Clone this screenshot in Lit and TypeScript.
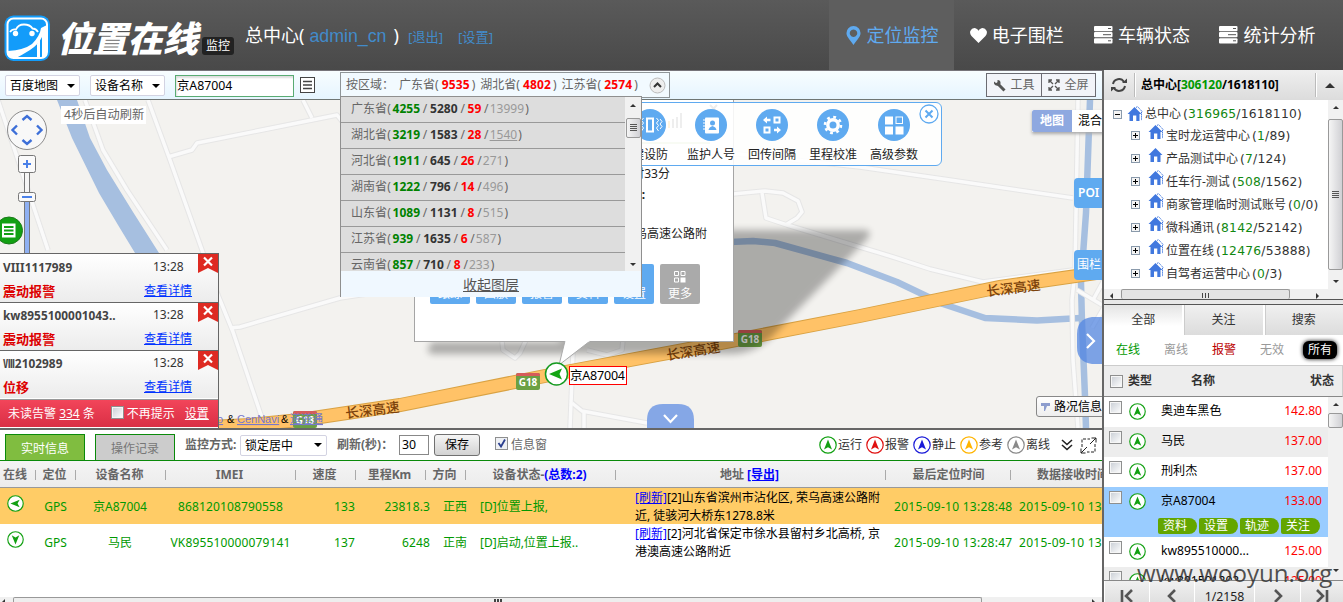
import { LitElement, html, svg, css } from "lit";
import { customElement } from "lit/decorators.js";

const PROVINCES: [string, number, number, number, number][] = [
  ["广东省", 4255, 5280, 59, 13999],
  ["湖北省", 3219, 1583, 28, 1540],
  ["河北省", 1911, 645, 26, 271],
  ["湖南省", 1222, 796, 14, 496],
  ["山东省", 1089, 1131, 8, 515],
  ["江苏省", 939, 1635, 6, 587],
  ["云南省", 857, 710, 8, 233],
];
const ALARMS = [
  { name: "VIII1117989", type: "震动报警" },
  { name: "kw8955100001043..", type: "震动报警" },
  { name: "Ⅷ2102989", type: "位移" },
];
const TREE: [string, string, string, boolean][] = [
  ["宝时龙运营中心", "1", "89", true],
  ["产品测试中心", "7", "124", false],
  ["任车行-测试", "508", "1562", true],
  ["商家管理临时测试账号", "0", "0", true],
  ["微科通讯", "8142", "52142", true],
  ["位置在线", "12476", "53888", true],
  ["自驾者运营中心", "0", "3", true],
];
const DEVICES = [
  { name: "奥迪车黑色", v: "142.80" },
  { name: "马民", v: "137.00" },
  { name: "刑利杰", v: "137.00" },
  { name: "京A87004", v: "133.00", sel: true },
  { name: "kw895510000...", v: "125.00" },
  { name: "kw891501202...", v: "125.00" },
];
const LEGEND = [
  ["运行", "#12a012"],
  ["报警", "#e01010"],
  ["静止", "#1a1ad8"],
  ["参考", "#ffb400"],
  ["离线", "#8a8a8a"],
];

/* Round compass marker; rot turns the arrow away from north. */
const compass = (size: number, color = "#12a012", rot = 0) => html`<svg width=${size} height=${size} viewBox="0 0 18 18">
  <circle cx="9" cy="9" r="8.2" fill="#fff" stroke=${color} stroke-width="1.2" />
  <path d="M9 3.6L13 13.4L9 11.2L5 13.4Z" fill=${color} transform="rotate(${rot} 9 9)" />
</svg>`;

const house = (double: boolean) => html`<svg class="house" width="16" height="16" viewBox="0 0 16 16">
  ${double ? svg`<path d="M9 1.5L10.5 .5L15.5 6M14.5 6V14.5" fill="none" stroke="#4178de" stroke-width="1" stroke-dasharray="1.4 .7"/>` : ""}
  <path d="M7.5 1L14.5 8H12.5V15H9.3V9.5H6V15H2.5V8H.5Z" fill="#4178de" />
</svg>`;

const server = html`<svg width="19" height="18" viewBox="0 0 19 18">
  <rect width="18.5" height="5.2" rx="1" fill="#fff" /><rect y="6.1" width="18.5" height="5.2" rx="1" fill="#fff" />
  <rect y="12.2" width="18.5" height="5.2" rx="1" fill="#fff" />
  <path d="M14 2.5h3M9 8.7h8M14 14.8h3" stroke="#555" stroke-width="1" />
</svg>`;

const ROADS = [
  "M85 100L103 150L127 190L167 250",
  "M148 100L170 160L202 250L218 295L233 332L262 418",
  "M168 157L192 150L197 143L337 115L345 125",
  "M303 100L312 118",
  "M230 328L240 327L340 298L413 287",
  "M-2 100L8 130L48 250",
  "M733 194L765 191L783 193L798 201L802 212L797 218L787 224",
  "M762 193L766 218L787 225L870 250L893 257L930 269L983 282L1073 270",
  "M700 150L860 167L950 180L1073 198",
  "M1078 100L1075 270L1072 300L1073 360L1078 428",
  "M1077 290L1102 305",
  "M1104 280L1093 300",
  "M1104 307L1092 328",
  "M573 353L570 428",
  "M572 403L582 411L647 423",
  "M584 412V428",
  "M502 342L503 350L515 358L520 353L526 340",
  "M587 350L607 355L622 350L623 340",
];
const HIGHWAY = "M190 428L250 425L300 420L340 414L400 405L560 373L700 347L860 316L1000 287L1104 272";

const shield = (x: number, y: number) => svg`<g>
  <rect x=${x - 12} y=${y - 9} width="24" height="17" rx="2" fill="#6ba043"/>
  <path d="M${x - 12} ${y - 6}v-1q0-2 2-2h20q2 0 2 2v1z" fill="#d65c5a"/>
  <text x=${x} y=${y + 4} class="g18">G18</text></g>`;

@customElement("app-root")
export class AppRoot extends LitElement {
  static styles = css`
    :host { display: block; width: 1343px; height: 602px; overflow: hidden; position: relative; font: 12px/16px "Noto Sans", "Noto Sans CJK SC", sans-serif; color: #333; background: #fff; }
    * { box-sizing: border-box; }
    svg { display: block; flex: none; }
    span, b, a, u { white-space: nowrap; }
    .head { height: 71px; display: flex; background: linear-gradient(#5a5a5a, #494949); border-bottom: 1px solid #77747a; color: #fff; }
    .brand { display: flex; width: 829px; padding: 15px 0 0 4px; }
    .wordmark { font: italic 900 35.5px/46px "Noto Sans CJK SC", sans-serif; letter-spacing: -.3px; margin-left: 6px; margin-top: -1px; width: 146px; }
    .badge { margin: 22px 0 0 -1px; width: 32px; height: 18px; border-radius: 3px; background: #222; font-size: 12px; line-height: 18px; text-align: center; }
    .org { font-size: 18px; line-height: 24px; margin: 8px 0 0 11px; display: flex; align-items: baseline; }
    .org .adm { color: #428bca; font-family: "Liberation Sans", sans-serif; margin: 0 7px 0 5px; font-size: 17.8px; }
    .org .lk { color: #428bca; font-size: 13.2px; margin-left: 9px; width: 41px; }
    .nav { display: flex; }
    .nav div { width: 125.4px; height: 70px; display: flex; align-items: center; justify-content: center; gap: 5px; font-size: 18px; line-height: 24px; }
    .nav .on { background: #5e5e5e; color: #5faaf0; width: 125px; padding-left: 1px; gap: 6px; }
    .body { display: flex; height: 531px; }
    .left { width: 1102px; height: 531px; position: relative; }
    .bar { height: 29px; display: flex; align-items: flex-start; padding: 3px 6px 0 5px; background: linear-gradient(#f8fdff, #e6f5ff); border-bottom: 1px solid #6f7674; }
    .sel { height: 21px; width: 75px; background: #fff; border: 1px solid #d3d3e2; border-radius: 2px; padding: 0 4px; display: flex; align-items: center; justify-content: space-between; color: #000; line-height: 19px; }
    .sel::after { content: ""; border: 4px solid transparent; border-top-color: #000; border-bottom: 0; }
    .inp { border: 1px solid #59ab73; background: #fff; color: #000; width: 119px; height: 22px; padding-left: 1px; line-height: 20px; font-size: 12.3px; box-shadow: inset 1px 2px 2px #ddd; }
    .tools { display: flex; margin-left: auto; margin-top: -1px; border: 1px solid #6b6b72; height: 24px; color: #666; background: #f2f4f9; }
    .tools div { width: 54px; display: flex; align-items: center; justify-content: center; gap: 4px; }
    .tools div + div { border-left: 1px solid #6b6b72; }
    .region { position: absolute; left: 340px; top: 1px; width: 330px; height: 26px; border: 1px solid #8f9598; background: #f2faff; color: #666; display: flex; align-items: center; padding-left: 5px; font-size: 12px; }
    .region span { margin-right: 5px; }
    .region b { color: #f00; letter-spacing: .15px; padding: 0 2px 0 3px; }
    .region svg { margin-left: 6px; }
    .drop { position: absolute; left: 340px; top: 25px; width: 302px; height: 201px; border: 1px solid #8f8f8f; background: #ddd; }
    .dcols { display: flex; height: 174px; }
    .dlist { width: 284px; overflow: hidden; color: #666; }
    .dlist div { height: 26px; border-bottom: 1px solid #999; line-height: 24px; padding-left: 10px; letter-spacing: .05px; white-space: nowrap; }
    .dlist b { padding: 0 1.7px; } .dlist i { font-style: normal; padding: 0 1px; } .dlist span { padding-right: 1px; }
    .g { color: #090; } .dlist .g { color: #008200; } .k { color: #333; } .r { color: #f00; } .gy { color: #999; }
    .dfoot { background: #f0f8ff; height: 26px; text-align: center; font-size: 14px; line-height: 27px; color: #555; text-decoration: underline; }
    .map { height: 328px; position: relative; overflow: hidden; background: #f3f2ef; }
    .map > .base { position: absolute; left: 0; top: 0; }
    .g18 { font: bold 10px "Noto Sans", sans-serif; fill: #fff; text-anchor: middle; }
    .rd { font: 500 13.6px "Noto Sans CJK SC", sans-serif; fill: #7c430c; text-anchor: middle; }
    .mk { font: 12.5px "Noto Sans", "Noto Sans CJK SC", sans-serif; fill: #000; }
    .tick { position: absolute; left: 61px; top: 6px; width: 85px; height: 18px; background: #fff; color: #666; font-size: 12.2px; line-height: 18px; padding-left: 3px; }
    .info { position: absolute; left: 414px; top: 0; width: 320px; height: 242px; border: 1px solid #a5a5a5; border-top: 0; background: #fff; color: #222; }
    .itop { height: 44px; border-bottom: 2px solid #c5dea2; margin: 0 23px 22px 15px; display: flex; justify-content: flex-end; padding-top: 13px; gap: 27px; }
    .info p { margin: 0; text-align: right; height: 18px; white-space: nowrap; }
    .info .p1 { padding-right: 63px; } .info .p2 { padding-right: 88px; margin-top: 3px; } .info .p3 { padding-right: 26px; margin-top: 21px; }
    .acts { display: flex; gap: 6px; padding: 20px 0 0 15px; }
    .acts div { width: 40px; height: 40px; border-radius: 2px; background: #5faaf0; color: #fff; text-align: center; line-height: 18px; padding-top: 7px; }
    .acts div:last-child { background: #aaa; } .acts svg { margin: 0 auto 2px; }
    .ptool { position: absolute; left: 430px; top: 2px; width: 512px; height: 64px; border: 1px solid #5faaf0; border-radius: 6px; background: rgba(255,255,255,.88); display: flex; padding: 6px 0 0 188.5px; }
    .ptool > div { width: 61px; color: #222; text-align: center; } .ptool > div svg { margin: 0 auto 6px; }
    .ptool .x { position: absolute; right: 2px; top: 1px; }
    .alarm { position: absolute; left: 0; top: 153px; width: 219px; height: 176px; background: #fff; border-right: 1px solid #666; }
    .al { height: 48px; border-top: 1px solid #666; background: linear-gradient(#fff, #ececec); position: relative; display: grid; grid-template-columns: 141px 1fr; grid-template-rows: 16px 16px; row-gap: 8px; padding: 4px 26px 0 3px; }
    .al:first-child { height: 49px; padding-top: 5px; } .al b { color: #444; font-size: 11.8px; letter-spacing: .05px; } .al span { padding-left: 9px; } .al .t { color: #d00; font-size: 13px; } .al a { color: #03f; text-decoration: underline; }
    .al svg { position: absolute; right: 0; top: 0; }
    .afoot { height: 28px; margin-top: 1px; border-top: 1px solid #999; background: linear-gradient(#f2455a, #da2f45); color: #fff; display: flex; align-items: center; padding-left: 8px; }
    .cb { width: 13px; height: 13px; border: 1px solid #8e8f8f; background: linear-gradient(135deg, #c8cdd4, #fff); box-shadow: inset 0 0 0 1px #f6f6f6; flex: none; }
    .afoot .cb { margin: -3px 3px 0 16px; } .afoot > u { margin-left: 10px; }
    .mt { position: absolute; left: 1032px; top: 10px; width: 72px; height: 22px; display: flex; line-height: 22px; background: #fff; box-shadow: 0 2px 3px #aaa; color: #000; }
    .mt b { width: 40px; background: #8ea8e0; color: #fff; text-align: center; border-radius: 2px 0 0 2px; } .mt span { padding-left: 6px; }
    .side { position: absolute; left: 1074px; width: 30px; height: 30px; background: #5faaf0; color: #fff; border-radius: 4px 0 0 4px; line-height: 30px; padding-left: 3px; }
    .poi { top: 78px; font-weight: 600; padding-left: 4px; } .fence { top: 150px; }
    .traf { position: absolute; left: 1036px; top: 296px; width: 70px; height: 21px; border: 1px solid #888; border-radius: 3px; background: linear-gradient(#fff, #eee); color: #000; display: flex; align-items: center; gap: 4px; padding-left: 4px; }
    .low { height: 174px; border-top: 2px solid #666; background: #fff; position: relative; overflow: hidden; }
    .ctl { display: flex; height: 31px; align-items: center; border-bottom: 1px solid #0a8a0a; padding: 0 5px; color: #666; }
    .tab { width: 80px; height: 26px; border: 1px solid #0a8a0a; border-bottom: 0; background: #80bd40; color: #fff; text-align: center; line-height: 27px; align-self: flex-end; }
    .tab.off { background: #ccc; color: #777; margin-left: 10px; }
    .btn { width: 46px; height: 22px; border: 1px solid #707070; border-radius: 3px; background: linear-gradient(#f5f5f5, #d2d2d2); color: #000; line-height: 20px; text-align: center; }
    .leg { display: flex; align-items: center; margin-left: auto; color: #333; } .leg span { width: 29px; padding-left: 1px; }
    .hr, .row { display: grid; width: 1160px; }
    .hr { grid-template-columns: 36px 40px 90px 130px 60px 70px 40px 150px 270px 125px 140px; height: 27px; background: linear-gradient(#f4f4f4, #ececec); border-bottom: 1px solid #999; font-weight: bold; color: #666; line-height: 27px; text-align: center; white-space: nowrap; }
    .hr > div { position: relative; padding-right: 3px; } .hr > div:nth-child(1) { padding-right: 6px; } .hr > div:nth-child(10) { padding-right: 0; }
    .hr > div::after { content: ""; position: absolute; right: 0; top: 9px; height: 10px; border-right: 1px solid #aaa; }
    .hr > div.last { text-align: left; padding-left: 26px; }
    .hr em { font-style: normal; color: #00f; } .hr u { color: #00f; }
    .row { grid-template-columns: 36px 39px 90px 131px 59px 75px 50px 155px 259px 125px 130px; height: 36px; line-height: 38px; color: #090; background: #fff; text-align: center; white-space: nowrap; }
    .row.hot { background: #fc6; } .row svg { margin: 7px 0 0 7px; } .row .n { letter-spacing: .27px; } .row .rt { text-align: right; }
    .row .im { letter-spacing: .14px; }
    .row .lt { text-align: left; } .row .ad { text-align: left; color: #000; line-height: 18px; padding-top: 1px; white-space: pre; } .row .ad u { color: #00f; }
    .hs { position: absolute; left: 0; bottom: 0; width: 1102px; height: 5px; background: #f0f0f0; display: flex; align-items: flex-start; }
    .hs div { margin-left: 8px; width: 969px; height: 5px; border: 1px solid #999; border-bottom: 0; border-radius: 2px 2px 0 0; background: #eee; }
    .hs div i, .th div i { display: block; margin: 1px auto; width: 8px; height: 3px; background: repeating-linear-gradient(90deg, #444 0 2px, transparent 2px 3px); }
    .la, .ra { border: 3.5px solid transparent; flex: none; width: 0; height: 0; } .la { border-right-color: #333; border-left: 0; } .ra { border-left-color: #333; border-right: 0; }
    .hs .la { margin: 2px 0 0 2px; } .hs .ra { margin: 2px 0 0 110px; }
    .right { width: 241px; margin-top: -1px; height: 532px; border-left: 2px solid #666; background: #fff; overflow: hidden; }
    .rh { height: 30px; background: linear-gradient(#efefef, #dcdcdc); display: flex; align-items: center; padding-left: 7px; color: #000; font-size: 12px; }
    .rh i { width: 2px; height: 24px; border-left: 1px solid #bbb; background: #fff; flex: none; }
    .rh svg + i { margin-left: 7px; }
    .rh b { width: 179px; padding-left: 5px; letter-spacing: -.02px; }
    .tri { border: 5px solid transparent; border-bottom-color: #333; border-top: 0; margin-left: 8px; }
    .tree { display: flex; height: 189px; }
    .nodes { width: 224px; padding-top: 4px; overflow: hidden; }
    .nd { height: 23px; display: flex; align-items: center; padding-left: 27px; }
    .nd.root { padding-left: 9px; height: 20px; } .nd .house { margin: 0 2px 0 8px; align-self: flex-start; } .nd.root .house { margin: 2px 2px 0 5px; }
    .nd em { font: 12.3px/16px "DejaVu Sans", sans-serif; letter-spacing: .22px; margin-left: 2px; } .nd em i { font-style: normal; color: #118811; }
    .pm { width: 9px; height: 9px; border: 1px solid #8a9aab; background: #f4f4f4; position: relative; flex: none; }
    .pm::before { content: ""; position: absolute; left: 1px; top: 3px; width: 5px; height: 1px; background: #000; }
    .plus::after { content: ""; position: absolute; left: 3px; top: 1px; width: 1px; height: 5px; background: #000; }
    .vs { width: 15px; background: #f1f1f1; display: flex; flex-direction: column; align-items: center; justify-content: space-between; padding: 6px 0; }
    .up, .dn { border: 3.5px solid transparent; flex: none; } .up { border-bottom-color: #333; border-top: 0; } .dn { border-top-color: #333; border-bottom: 0; }
    .vt { width: 15px; border: 1px solid #999; border-radius: 2px; background: linear-gradient(90deg, #f5f5f5, #d0d0d4); display: flex; align-items: center; justify-content: center; }
    .vt i { width: 7px; height: 8px; background: repeating-linear-gradient(#555 0 1px, transparent 1px 2px); }
    .vt.big { height: 151px; } .vt.mid { height: 20px; margin-bottom: 114px; } .vt.tiny { height: 15px; }
    .th { height: 10px; background: #f0f0f0; display: flex; padding-left: 6px; align-items: flex-start; overflow: hidden; } .th div { margin-left: 8px; width: 169px; height: 10px; border: 1px solid #999; border-bottom: 0; border-radius: 2px; background: #e4e4e4; } .th div i { margin-top: 3px; height: 5px; background: repeating-linear-gradient(90deg, #444 0 1px, transparent 1px 3px); }
    .th .la { margin-top: 4px; } .th .ra { margin: 4px 0 0 26px; }
    .split { height: 6px; border-top: 1px solid #555; border-bottom: 1px solid #555; background: #e8e8e8; }
    .tabs { display: flex; height: 30px; } .tabs div { flex: 1; text-align: center; line-height: 29px; background: linear-gradient(#f0f0f0, #dcdcdc); border-left: 2px solid #fff; box-shadow: inset 1px 0 #ccc; } .tabs .on { background: linear-gradient(#e4e4e4, #fff 70%); box-shadow: none; border: 0; }
    .fil { display: flex; height: 30px; padding-left: 12px; align-items: center; } .fil span { width: 48px; } .fil .alarmed { color: #b00; }
    .fil b { font-weight: 400; width: 34px; height: 18px; background: #000; color: #fff; border-radius: 6px; text-align: center; box-shadow: 0 0 4px #000; line-height: 17px; margin-left: -5px; }
    .lh { height: 32px; background: #ededed; border: 1px solid #ccc; border-bottom-color: #888; border-left: 0; display: flex; align-items: center; padding-left: 6px; font-weight: bold; }
    .lh .c1 { margin-left: 5px; width: 63px; } .lh .c2 { width: 119px; }
    .list { height: 183px; display: flex; overflow: hidden; } .list .vs { justify-content: flex-start; gap: 7px; } .list .dn { margin-top: 134px; }
    .rows { width: 224px; } .dv { height: 30px; display: grid; grid-template-columns: 20px 32px 1fr 50px; padding-left: 5px; color: #000; } .dv:nth-child(even) { background: #ededed; }
    .dv .cb { margin-top: 4px; } .dv svg { margin-top: 6px; } .dv span, .dv em { line-height: 27px; font-style: normal; font-size: 12.1px; } .dv em { color: #f00; padding-right: 6px; text-align: right; }
    .dv.sel2 { height: 50px; background: #9cf; } .ops { grid-column: 3 / 5; display: flex; gap: 2px; margin: 1px 0 0 -3px; } .ops u { text-decoration: none; width: 39px; height: 16px; background: #64a600; color: #fff; border-radius: 2px 8px 8px 2px; line-height: 16px; padding-left: 5px; }
    .pg { height: 26px; background: linear-gradient(#f0f0f0, #ddd); border-top: 1px solid #888; display: grid; grid-template-columns: 45px 45px 60px 46px 43px; } .pg div { border-left: 1px solid #fff; display: flex; justify-content: center; padding-top: 8px; color: #222; font-size: 12.3px; }
    .wm { position: absolute; left: 1137px; top: 557px; font: 24.1px/32px "Open Sans", "Noto Sans", sans-serif; color: rgba(50,50,50,.85); }
    .c-mode { margin-left: 10px; width: 55px; } .c-lock { width: 87px; } .c-ref { margin-left: 10px; width: 62px; }
    .c-sec { width: 30px; height: 20px; line-height: 18px; border-color: #888; padding-left: 2px; box-shadow: none; }
    .c-save { margin-left: 5px; } .c-chk { margin: -4px 3px 0 15px; } .c-dbl { margin: 0 7px; }
    .bar { position: relative; } .bar .sel, .bar .inp { margin-top: 1px; } .bar .dev { margin: 1px 10px 0; } .bar .menu { margin: 3px 0 0 6px; }
    .drop .vs { width: 16px; padding: 7px 0 5px; } .ul { text-decoration: underline; }
  `;

  header() {
    return html`<div class="head">
      <div class="brand">
        <svg width="47" height="47" viewBox="0 0 47 47">
          <rect x=".5" y=".5" width="45.5" height="45.5" rx="9" fill="#139cfa" />
          <rect x="3.5" y="3.5" width="39.5" height="39.5" rx="6" fill="none" stroke="#fff" stroke-width="2" />
          <path d="M6 17Q8 14 12 14.500Q14 9.500 20 9.500Q26 9.500 28.500 13.500Q32 13.500 34 17" fill="none" stroke="#fff" stroke-width="1.800" />
          <circle cx="11.500" cy="18.500" r="2.700" fill="#fff" /><circle cx="28" cy="18.500" r="2.700" fill="#fff" />
          <path d="M4 36Q20 35 28 29Q36 21 37 13L43 10V40Q42 43 38 43V22Q34 30 26 35Q18 40 12 43H7Q4 42 4 39Z" fill="#fff" />
          <path d="M33 29V43H36V23Z" fill="#fff" />
        </svg>
        <span class="wordmark">位置在线</span><span class="badge">监控</span>
        <div class="org"><span>总中心(</span><span class="adm">admin_cn</span><span>)</span><span class="lk">[退出]</span><span class="lk">[设置]</span></div>
      </div>
      <div class="nav">
        <div class="on"><svg width="15" height="19" viewBox="0 0 15 19"><path d="M7.500 0A7 7 0 0 1 14.500 7.500C14.500 11 10 15 7.500 19C5 15 .5 11 .5 7.500A7 7 0 0 1 7.500 0ZM7.500 3.500a3.700 3.700 0 1 0 .01 0Z" fill="#5faaf0" fill-rule="evenodd"/></svg><span>定位监控</span></div>
        <div><svg width="17" height="15" viewBox="0 0 17 15"><path d="M8.500 15L1.500 8Q-.5 5.500 .3 3Q2 -.5 5.500 .2Q7.800 .8 8.500 2.800Q9.200 .8 11.500 .2Q15 -.5 16.700 3Q17.500 5.500 15.500 8Z" fill="#fff"/></svg><span>电子围栏</span></div>
        <div>${server}<span>车辆状态</span></div>
        <div>${server}<span>统计分析</span></div>
      </div>
    </div>`;
  }

  mapBase() {
    return html`<svg class="base" width="1102" height="328" viewBox="0 100 1102 328">
      <defs><filter id="soft" x="-10%" y="-20%" width="120%" height="140%"><feGaussianBlur stdDeviation="3.500" /></filter></defs>
      <path d="M57 100H77L90 138L107 170L133 212L159 253H135L118 225L99 193L72 138Z" fill="#a6bfe0" />
      <g fill="none" stroke="#a6bfe0" stroke-width="6.500" stroke-linejoin="round">
        <path d="M730 242L753 241L775 243L847 263L897 282L943 304L985 318L1037 320.500L1081 318" />
        <path d="M1090 100L1086 213L1081 283L1082 323L1085 397L1086 428" />
      </g>
      <g fill="none" stroke="#e6e6e6" stroke-width="5.500" stroke-linejoin="round">${ROADS.map((d) => svg`<path d=${d}/>`)}</g>
      <g fill="none" stroke="#fafafa" stroke-width="3.500" stroke-linejoin="round">${ROADS.map((d) => svg`<path d=${d}/>`)}</g>
      <path d=${HIGHWAY} fill="none" stroke="#d9a243" stroke-width="14" />
      <path d=${HIGHWAY} fill="none" stroke="#ffc267" stroke-width="12" />
      ${shield(750, 339)}${shield(528, 382)}${shield(305, 420)}
      <text class="rd" transform="translate(694 356) rotate(-9)">长深高速</text>
      <text class="rd" transform="translate(1014 293) rotate(-7)">长深高速</text>
      <text class="rd" transform="translate(373 415) rotate(-7)">长深高速</text>
      <path d="M560 230H866Q872 231 868 238L778 330Q758 354 730 354H432Q424 352 432 342H560Z" fill="#000" opacity=".29" filter="url(#soft)" />
      <g font-family="Liberation Sans" font-size="11"><text x="217" y="423" fill="#77c" text-decoration="underline">o</text><text x="227" y="423">&amp;</text><text x="237" y="423" fill="#77c" text-decoration="underline">CenNavi</text><text x="281" y="423">&amp;</text><text x="290" y="423" fill="#77c" text-decoration="underline" font-family="Noto Sans CJK SC">道道通</text></g>
      <path d="M647 428V420Q647 404 663 404H678Q694 404 694 420V428Z" fill="#85a7e6" />
      <path d="M664 415L670.500 422L677 415" fill="none" stroke="#fff" stroke-width="2.200" />
    </svg>`;
  }

  mapTop() {
    return html`<svg class="base" width="1102" height="328" viewBox="0 100 1102 328">
      <path d="M565 341L559 365L590 341" fill="#fff" stroke="#aaa" /><path d="M565.500 340H589.500V341.500H565.500Z" fill="#fff" />
      <circle cx="556.500" cy="374" r="11" fill="#fff" stroke="#159a20" stroke-width="1.500" />
      <path d="M549 374L562 368.500L559.500 374L562 379.500Z" fill="#14a514" />
      <rect x="569.500" y="366.500" width="57" height="18" fill="#fff" stroke="#f00" /><text class="mk" x="570" y="380" textLength="55">京A87004</text>
      <rect x="24.500" y="172" width="5" height="90" fill="#f5f5f5" stroke="#777" /><rect x="25" y="202" width="4" height="55" fill="#8fb0f2" />
      <circle cx="27" cy="130" r="19.500" fill="#f8f8f8" stroke="#8a8a8a" />
      <path d="M22.500 120L27 116L31.500 120M22.500 140L27 144L31.500 140M17 125.500L12.500 130L17 134.500M37 125.500L41.500 130L37 134.500" fill="none" stroke="#3d6fd8" stroke-width="2.400" />
      <rect x="18.500" y="155.500" width="17" height="17" rx="2" fill="#fafafa" stroke="#777" /><path d="M23 164H31M27 160V168" stroke="#4a80e8" stroke-width="2" />
      <rect x="18.500" y="192.500" width="17" height="9" rx="2" fill="#fafafa" stroke="#777" /><path d="M22 197H32" stroke="#4a80e8" stroke-width="2" />
      <circle cx="9" cy="230.500" r="13.500" fill="#12a012" stroke="#1b7a1b" /><path d="M2 223.500H15.500V237.500H2Z" fill="#fff" /><path d="M4 227H13.500M4 230.500H13.500M4 234H13.500" stroke="#12a012" stroke-width="1.800" />
      <path d="M1102 317H1092Q1077 319 1077 334V347Q1077 362 1092 364H1102Z" fill="#4e82e0" opacity=".72" />
      <path d="M1087 334L1094 341L1087 348" fill="none" stroke="#fff" stroke-width="2.200" />
    </svg>`;
  }

  toolIcon(k: number) {
    const art = [
      svg`<path d="M13 9.500h6v13h-6z" fill="none" stroke="#fff" stroke-width="2"/><path d="M9.500 9l-2 2.500 2 2.500-2 2.500 2 2.500-2 3M6 10l-2 2.500 2 2.500-2 2.500 2 2.500M22.500 9l2 2.500-2 2.500 2 2.500-2 2.500 2 3M26 10l2 2.500-2 2.500 2 2.500-2 2.500" fill="none" stroke="#fff"/>`,
      svg`<rect x="10" y="8.500" width="14" height="16" rx="1" fill="#fff"/><path d="M8 11h4M8 14h4M8 17h4M8 20h4" stroke="#fff"/><circle cx="17.500" cy="14" r="2.500" fill="#5faaf0"/><path d="M13.500 21q.5-3 4-4 3.500 1 4 4z" fill="#5faaf0"/>`,
      svg`<path d="M18.500 8.500h5v5h-5zM8.500 18.500h5v5h-5z" fill="none" stroke="#fff" stroke-width="2"/><path d="M7 11l4-3.500v2.300h3.500v2.400h-3.500v2.300zM25 21l-4-3.500v2.300h-3v2.400h3v2.300z" fill="#fff"/>`,
      svg`<circle cx="16" cy="16" r="5.200" fill="none" stroke="#fff" stroke-width="3.400"/><circle cx="16" cy="16" r="8" fill="none" stroke="#fff" stroke-width="2.600" stroke-dasharray="2.800 3.480"/>`,
      svg`<path d="M7 7.500h8v8h-8zM7 17.500h8v8h-8zM17.500 17.500h8v8h-8z" fill="#fff"/><rect x="18" y="8" width="6.500" height="6.500" fill="none" stroke="#fff"/>`,
    ];
    return html`<svg width="32" height="32" viewBox="0 0 32 32"><circle cx="16" cy="16" r="16" fill="#5faaf0" />${art[k]}</svg>`;
  }

  map() {
    return html`<div class="map">
      ${this.mapBase()}
      <div class="info">
        <div class="itop">
          <svg width="18" height="16" viewBox="0 0 18 16"><path d="M1 15V10M5 15V8" stroke="#f5a000" stroke-width="2" /><path d="M9 15V6M13 15V4M17 15V0" stroke="#777" stroke-width="2" /></svg>
          <svg width="9" height="9" viewBox="0 0 9 9" style="margin:-9px -8px 0 0"><path d="M1 1L8 8M8 1L1 8" stroke="#666" stroke-width="2" /></svg>
        </div>
        <p class="p1">17时33分</p><p class="p2"><b>地址:</b></p><p class="p3">荣乌高速公路附</p>
        <div class="acts">${["跟踪", "回放", "报警", "资料", "设置", "更多"].map((t) => html`<div><svg width="12" height="12" viewBox="0 0 12 12"><path d="M.5 .5h4v4h-4zM7 .5h4v4h-4zM.5 7h4v4h-4z" fill="none" stroke="#fff"/><path d="M6.500 6.500h5v5h-5z" fill="#fff"/></svg>${t}</div>`)}</div>
      </div>
      <div class="ptool">${["键设防", "监护人号", "回传间隔", "里程校准", "高级参数"].map((t, k) => html`<div>${this.toolIcon(k)}<span>${t}</span></div>`)}
        <svg class="x" width="20" height="20" viewBox="0 0 20 20"><circle cx="10" cy="10" r="9" fill="#fff" stroke="#5faaf0" stroke-width="1.300" /><path d="M6.500 6.500L13.500 13.500M13.500 6.500L6.500 13.500" stroke="#5faaf0" stroke-width="2" /></svg>
      </div>
      ${this.mapTop()}
      <div class="tick">4秒后自动刷新</div>
      <div class="mt"><b>地图</b><span>混合</span></div>
      <div class="side poi">POI</div><div class="side fence">围栏</div>
      <div class="traf"><svg width="9" height="10" viewBox="0 0 9 10"><path d="M0 1H9V4H6L4 9H3V4H0Z" fill="#8d9dce" /></svg><span>路况信息</span></div>
      <div class="alarm">${ALARMS.map((a) => html`<div class="al"><b>${a.name}</b><span>13:28</span><b class="t">${a.type}</b><a>查看详情</a>
          <svg width="20" height="19" viewBox="0 0 20 19"><path d="M0 0H20V19L10 14L0 19Z" fill="#de2a22" /><path d="M6 3.500L14 11.500M14 3.500L6 11.500" stroke="#fff" stroke-width="2.200" /></svg></div>`)}
        <div class="afoot"><span>未读告警&nbsp;<u>334</u>&nbsp;条</span><i class="cb"></i><span>不再提示</span><u>设置</u></div>
      </div>
    </div>`;
  }

  lower() {
    const rows = [
      { rot: -90, name: "京A87004", imei: "868120108790558", sp: "133", km: "23818.3", dir: "正西", st: "[D]位置上报,", a: "[2]山东省滨州市沾化区, 荣乌高速公路附\n近, 徒骇河大桥东1278.8米", t: "2015-09-10 13:28:48" },
      { rot: 180, name: "马民", imei: "VK895510000079141", sp: "137", km: "6248", dir: "正南", st: "[D]启动,位置上报..", a: "[2]河北省保定市徐水县留村乡北高桥, 京\n港澳高速公路附近", t: "2015-09-10 13:28:47" },
    ];
    return html`<div class="low">
      <div class="ctl">
        <div class="tab">实时信息</div><div class="tab off">操作记录</div>
        <b class="c-mode">监控方式:</b><div class="sel c-lock">锁定居中</div>
        <b class="c-ref">刷新(秒)：</b><div class="inp c-sec">30</div>
        <div class="btn c-save">保存</div>
        <svg class="c-chk" width="13" height="13" viewBox="0 0 13 13"><rect x=".5" y=".5" width="12" height="12" fill="#eef0f4" stroke="#8e8f8f" /><path d="M3.500 6L6 9.500L10 2.500" fill="none" stroke="#2b3f8f" stroke-width="1.800" /></svg><span>信息窗</span>
        <div class="leg">${LEGEND.map(([t, c]) => html`${compass(18, c)}<span>${t}</span>`)}
          <svg class="c-dbl" width="12" height="12" viewBox="0 0 12 12"><path d="M1 1L6 5.500L11 1M1 6L6 10.500L11 6" fill="none" stroke="#222" stroke-width="1.600" /></svg>
          <svg width="17" height="17" viewBox="0 0 17 17"><path d="M2 10V2H10M15 7V15H7" fill="none" stroke="#222" stroke-dasharray="3 1.500" /><path d="M10 7L16 1M11.500 1H16V5.500M7 10L1 16M1 11.500V16H5.500" fill="none" stroke="#222" /></svg>
        </div>
      </div>
      <div class="hr">${["在线", "定位", "设备名称", "IMEI", "速度", "里程Km", "方向"].map((t) => html`<div>${t}</div>`)}<div>设备状态-<em>(总数:2)</em></div><div>地址 <u>[导出]</u></div><div>最后定位时间</div><div class="last">数据接收时间</div></div>
      ${rows.map((r, i) => html`<div class="row ${i ? "" : "hot"}"><div>${compass(17, "#12a012", r.rot)}</div><div>GPS</div><div>${r.name}</div><div class="im">${r.imei}</div><div class="rt im">${r.sp}</div><div class="rt im">${r.km}</div><div>${r.dir}</div><div class="lt">${r.st}</div><div class="ad"><u>[刷新]</u>${r.a}</div><div class="lt n">${r.t}</div><div class="lt n">${r.t}</div></div>`)}
      <div class="hs"><i class="la"></i><div><i></i></div><i class="ra"></i></div>
    </div>`;
  }

  right() {
    const chev = (d: string) => html`<svg width="16" height="14" viewBox="0 0 16 14"><path d=${d} fill="none" stroke="#555" stroke-width="2.600" /></svg>`;
    return html`<div class="right">
      <div class="rh"><svg width="16" height="16" viewBox="0 0 16 16"><path d="M2 7A6 6 0 0 1 13 5M14 9A6 6 0 0 1 3 11" fill="none" stroke="#444" stroke-width="2" /><path d="M11 6H16V1.500ZM5 10H0V14.500Z" fill="#444" /></svg><i></i><b>总中心[<span class="g">306120</span>/1618110]</b><i></i><div class="tri"></div></div>
      <div class="tree"><div class="nodes">
          <div class="nd root"><div class="pm"></div>${house(true)}<span>总中心</span><em>(<i>316965</i>/1618110)</em></div>
          ${TREE.map(([n, a, b, d]) => html`<div class="nd"><div class="pm plus"></div>${house(d)}<span>${n}</span><em>(<i>${a}</i>/${b})</em></div>`)}
        </div>
        <div class="vs"><div class="up"></div><div class="vt big"><i></i></div><div class="dn"></div></div></div>
      <div class="th"><i class="la"></i><div><i></i></div><i class="ra"></i></div><div class="split"></div>
      <div class="tabs"><div class="on">全部</div><div>关注</div><div>搜索</div></div>
      <div class="fil"><span class="g">在线</span><span class="gy">离线</span><span class="alarmed">报警</span><span class="gy">无效</span><b>所有</b></div>
      <div class="lh"><i class="cb"></i><span class="c1">类型</span><span class="c2">名称</span><span>状态</span></div>
      <div class="list"><div class="rows">${DEVICES.map((d) => html`<div class="dv ${d.sel ? "sel2" : ""}"><i class="cb"></i>${compass(17)}<span>${d.name}</span><em>${d.v}</em>
          ${d.sel ? html`<div class="ops"><u>资料</u><u>设置</u><u>轨迹</u><u>关注</u></div>` : ""}</div>`)}</div>
        <div class="vs"><div class="up"></div><div class="vt tiny"></div><div class="dn"></div></div></div>
      <div class="pg"><div>${chev("M3 1V13M13 1L7 7L13 13")}</div><div>${chev("M11 1L5 7L11 13")}</div><div>1/2158</div><div>${chev("M5 1L11 7L5 13")}</div><div>${chev("M3 1L9 7L3 13M13 1V13")}</div></div>
    </div>`;
  }

  render() {
    return html`${this.header()}
      <div class="body">
        <div class="left">
          <div class="bar">
            <div class="sel">百度地图</div><div class="sel dev">设备名称</div><div class="inp">京A87004</div>
            <svg class="menu" width="16" height="16" viewBox="0 0 16 16"><rect x=".5" y=".5" width="14" height="15" fill="#fff" stroke="#444" /><path d="M3 4.500H12M3 8H12M3 11.500H12" stroke="#444" stroke-width="1.500" /></svg>
            <div class="tools"><div><svg width="13" height="13" viewBox="0 0 13 13"><path d="M4 4L11.500 11.500" stroke="#555" stroke-width="3" /><path d="M1 2.500L3 4L4.500 3.500L4.500 1Q8 1 7.500 5Q5 8 2 6Q.5 4.500 1 2.500Z" fill="#555" /></svg><span>工具</span></div><div><svg width="12" height="12" viewBox="0 0 12 12"><path d="M1 4V1H4M8 1H11V4M11 8V11H8M4 11H1V8M1 1L5 5M11 1L7 5M11 11L7 7M1 11L5 7" fill="none" stroke="#555" stroke-width="1.300" /></svg><span>全屏</span></div></div>
          </div>
          ${this.map()}${this.lower()}
          <div class="region"><span>按区域：</span><span>广东省(<b>9535</b>)</span><span>湖北省(<b>4802</b>)</span><span>江苏省(<b>2574</b>)</span><svg width="17" height="17" viewBox="0 0 17 17"><circle cx="8.500" cy="8.500" r="7.500" fill="#eee" stroke="#bbb" /><path d="M5 10L8.500 6.500L12 10" fill="none" stroke="#333" stroke-width="2" /></svg></div>
          <div class="drop"><div class="dcols"><div class="dlist">${PROVINCES.map((p, i) => html`<div>${p[0]}(<b class="g">${p[1]}</b><i>/</i><b class="k">${p[2]}</b><i>/</i><b class="r">${p[3]}</b><i>/</i><span class="gy ${i === 1 ? "ul" : ""}">${p[4]}</span>)</div>`)}</div>
            <div class="vs"><div class="up"></div><div class="vt mid"><i></i></div><div class="dn"></div></div></div>
            <div class="dfoot">收起图层</div></div>
        </div>
        ${this.right()}
      </div>
      <div class="wm">www.wooyun.org</div>`;
  }
}
